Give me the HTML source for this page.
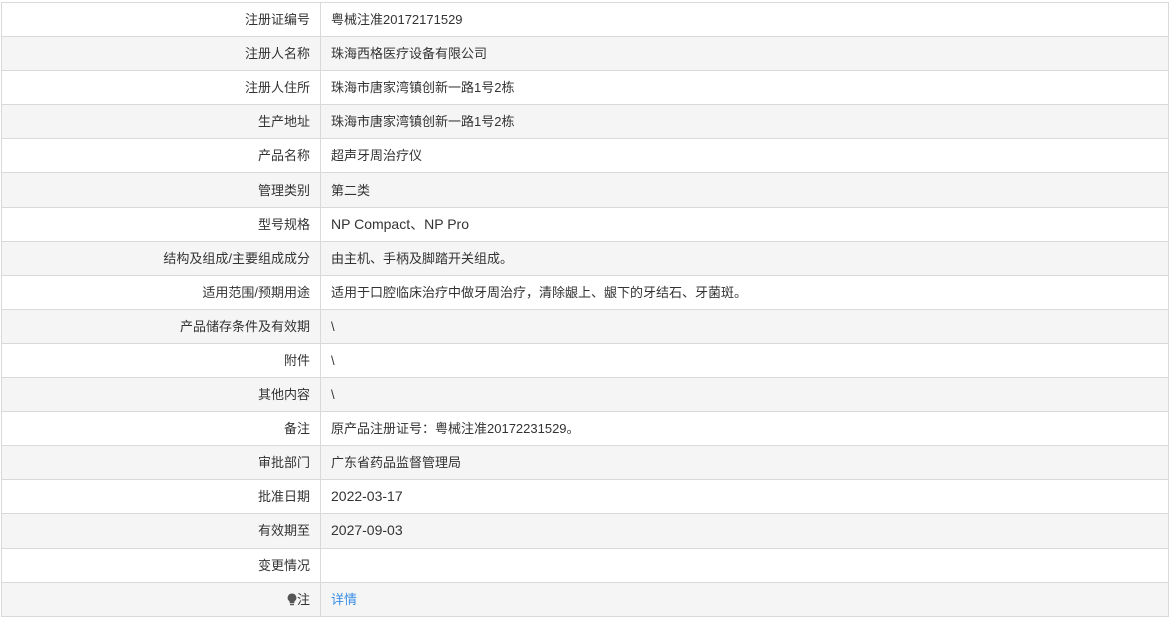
<!DOCTYPE html>
<html><head><meta charset="utf-8"><style>
body{margin:0;background:#fff;font-family:"Liberation Sans","Noto Sans CJK SC",sans-serif;font-size:13px;color:#333}
table{position:absolute;left:1px;top:2px;width:1168px;border-collapse:collapse;table-layout:fixed}
td{height:33.1px;border:1px solid #d9d9d9;padding:0 10px;line-height:33px;white-space:nowrap;overflow:hidden}
td.l{width:298px;text-align:right}
tr:nth-child(even) td{background:#f5f5f5}
a{color:#3a8ee6;text-decoration:none}
</style></head><body>
<table>
<tr><td class="l">注册证编号</td><td>粤械注准20172171529</td></tr>
<tr><td class="l">注册人名称</td><td>珠海西格医疗设备有限公司</td></tr>
<tr><td class="l">注册人住所</td><td>珠海市唐家湾镇创新一路1号2栋</td></tr>
<tr><td class="l">生产地址</td><td>珠海市唐家湾镇创新一路1号2栋</td></tr>
<tr><td class="l">产品名称</td><td>超声牙周治疗仪</td></tr>
<tr><td class="l">管理类别</td><td>第二类</td></tr>
<tr><td class="l">型号规格</td><td style="font-size:14px">NP Compact、NP Pro</td></tr>
<tr><td class="l">结构及组成/主要组成成分</td><td>由主机、手柄及脚踏开关组成。</td></tr>
<tr><td class="l">适用范围/预期用途</td><td>适用于口腔临床治疗中做牙周治疗，清除龈上、龈下的牙结石、牙菌斑。</td></tr>
<tr><td class="l">产品储存条件及有效期</td><td>\</td></tr>
<tr><td class="l">附件</td><td>\</td></tr>
<tr><td class="l">其他内容</td><td>\</td></tr>
<tr><td class="l">备注</td><td>原产品注册证号：粤械注准20172231529。</td></tr>
<tr><td class="l">审批部门</td><td>广东省药品监督管理局</td></tr>
<tr><td class="l">批准日期</td><td style="font-size:14px">2022-03-17</td></tr>
<tr><td class="l">有效期至</td><td style="font-size:14px">2027-09-03</td></tr>
<tr><td class="l">变更情况</td><td></td></tr>
<tr><td class="l"><svg width="10" height="13" viewBox="0 0 10 13" style="vertical-align:-2px"><path d="M5 0.5A4.3 4.3 0 0 0 2.6 8.4V10h4.8V8.4A4.3 4.3 0 0 0 5 0.5z" fill="#555"/><rect x="3" y="10.7" width="4" height="1.5" fill="#555"/></svg>注</td><td><a>详情</a></td></tr>
</table>
</body></html>
